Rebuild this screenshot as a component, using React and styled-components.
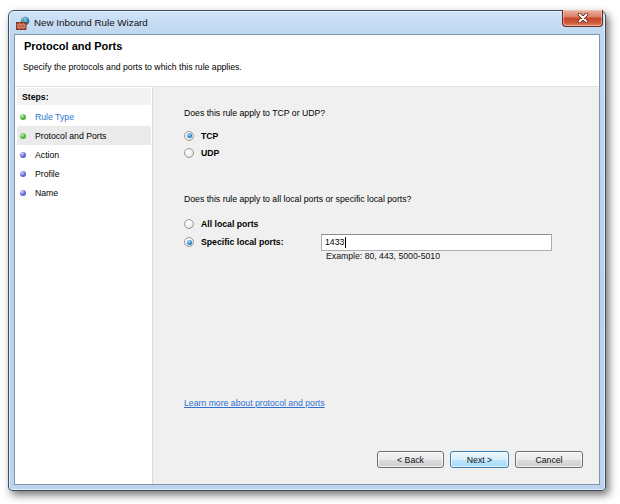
import React from "react";
import styled, { createGlobalStyle } from "styled-components";

const GlobalStyle = createGlobalStyle`
  html, body { margin: 0; padding: 0; background: #ffffff; }
  body {
    font-family: "Liberation Sans", Arial, sans-serif;
    font-size: 8.7px;
    color: #000;
  }
  * { box-sizing: border-box; }
`;

const Page = styled.div`
  width: 620px;
  height: 504px;
  padding: 10px 0 0 8px;
  overflow: hidden;
`;

const Window = styled.div`
  width: 598px;
  height: 481px;
  border: 1px solid #3e4f63;
  border-radius: 6px 6px 4px 4px;
  padding: 0 5px 5px 5px;
  display: flex;
  flex-direction: column;
  background: linear-gradient(180deg, #cfe3f8 0px, #bed6f0 24px, #b9d1eb 60%, #bcd4ee 100%);
  box-shadow: 3px 4px 9px rgba(0, 0, 0, 0.55), inset 0 0 0 1px rgba(255, 255, 255, 0.55);
`;

const TitleBar = styled.div`
  height: 23px;
  display: flex;
  align-items: center;
  padding-left: 2px;
  gap: 4px;
`;

const TitleText = styled.span`
  font-size: 9.8px;
  color: #111;
`;

const CloseButton = styled.div`
  margin-left: auto;
  align-self: flex-start;
  margin-top: -1px;
  margin-right: -3px;
  width: 41px;
  height: 17px;
  border: 1px solid #6b2a1f;
  border-top: none;
  border-radius: 0 0 4px 4px;
  background: linear-gradient(180deg, #eab2a2 0%, #dc8068 42%, #c4472c 52%, #cf5a3a 80%, #e0896c 100%);
  box-shadow: inset 0 0 0 1px rgba(255, 220, 210, 0.45);
  display: flex;
  align-items: center;
  justify-content: center;
`;

const Client = styled.div`
  flex: 1;
  min-height: 0;
  display: flex;
  flex-direction: column;
  background: #ffffff;
  border: 1px solid #8196ae;
`;

const Header = styled.div`
  height: 52px;
  padding: 5px 8px 0 8px;
  border-bottom: 1px solid #e2e2e2;
  background: #ffffff;
`;

const HeaderTitle = styled.div`
  font-weight: bold;
  font-size: 11px;
  line-height: 13px;
  padding-left: 1px;
`;

const HeaderSub = styled.div`
  margin-top: 9px;
  line-height: 11px;
`;

const Body = styled.div`
  flex: 1;
  min-height: 0;
  display: flex;
`;

const LeftPanel = styled.div`
  width: 138px;
  padding: 1px 1px 0 2px;
  background: #ffffff;
  border-right: 1px solid #dadada;
  display: flex;
  flex-direction: column;
`;

const StepsHeader = styled.div`
  height: 17px;
  background: #f2f2f2;
  font-weight: bold;
  display: flex;
  align-items: center;
  padding-left: 5px;
  margin-bottom: 2px;
`;

const StepRow = styled.div`
  height: 19px;
  display: flex;
  align-items: center;
  padding-left: 3px;
  gap: 9px;
  background: ${(p) => (p.$active ? "#ebebeb" : "transparent")};
  color: ${(p) => (p.$done ? "#2d74cf" : "#000")};
`;

const Bullet = styled.span`
  width: 6px;
  height: 6px;
  border-radius: 50%;
  flex: none;
  background: ${(p) =>
    p.$green
      ? "radial-gradient(circle at 35% 30%, #c8f2b8 0%, #5cc24a 45%, #2f8d22 100%)"
      : "radial-gradient(circle at 35% 30%, #d6d8ff 0%, #7474e0 45%, #3a3aa8 100%)"};
`;

const RightPanel = styled.div`
  flex: 1;
  background: #f0f0f0;
  display: flex;
  flex-direction: column;
  padding: 21px 16px 16px 31px;
`;

const Question = styled.div`
  line-height: 11px;
  margin-top: ${(p) => p.$mt || 0}px;
`;

const RadioGroup = styled.div`
  display: flex;
  flex-direction: column;
  margin-top: ${(p) => p.$mt || 0}px;
`;

const RadioRow = styled.div`
  height: ${(p) => p.$h || 17}px;
  display: flex;
  align-items: center;
  gap: 7px;
`;

const Radio = styled.span`
  width: 10px;
  height: 10px;
  border-radius: 50%;
  flex: none;
  border: 1px solid #9a9a9a;
  background: radial-gradient(circle at 40% 35%, #ffffff 0%, #f0f0f0 50%, #d4d4d4 100%);
  display: flex;
  align-items: center;
  justify-content: center;
  &::after {
    content: "";
    display: ${(p) => (p.$checked ? "block" : "none")};
    width: 5px;
    height: 5px;
    border-radius: 50%;
    background: radial-gradient(circle at 40% 35%, #b6e4ff 0%, #2f8fd0 50%, #124a78 100%);
  }
`;

const RadioLabel = styled.span`
  font-weight: bold;
  width: ${(p) => (p.$w ? `${p.$w}px` : "auto")};
  flex: none;
`;

const TextBox = styled.div`
  width: 231px;
  height: 17px;
  background: #ffffff;
  border: 1px solid #abadb3;
  border-top-color: #8e8f8f;
  display: flex;
  align-items: center;
  padding-left: 3px;
`;

const Caret = styled.span`
  display: inline-block;
  width: 1px;
  height: 11px;
  background: #000;
  margin-left: 1px;
`;

const Hint = styled.div`
  line-height: 11px;
  margin-left: 142px;
  color: #111;
`;

const Spacer = styled.div`
  flex: 1;
`;

const Link = styled.a`
  color: #2f6fd0;
  text-decoration: underline;
  line-height: 11px;
  align-self: flex-start;
  margin-bottom: 42px;
  cursor: pointer;
`;

const ButtonRow = styled.div`
  display: flex;
  justify-content: flex-end;
  gap: 6px;
`;

const Button = styled.div`
  width: ${(p) => p.$w}px;
  height: 17px;
  border: 1px solid ${(p) => (p.$default ? "#3c7fb1" : "#707070")};
  border-radius: 3px;
  display: flex;
  align-items: center;
  justify-content: center;
  color: #111;
  background: ${(p) =>
    p.$default
      ? "linear-gradient(180deg, #eaf6fd 0%, #d9f0fc 50%, #bee6fd 51%, #a7d9f5 100%)"
      : "linear-gradient(180deg, #f2f2f2 0%, #ebebeb 50%, #dddddd 51%, #cfcfcf 100%)"};
  box-shadow: inset 0 0 0 1px rgba(255, 255, 255, 0.7);
`;

const FirewallIcon = () => (
  <svg width="14" height="14" viewBox="0 0 14 14">
    <defs>
      <radialGradient id="globe" cx="40%" cy="35%" r="65%">
        <stop offset="0%" stopColor="#bfe6ff" />
        <stop offset="60%" stopColor="#3b8fd8" />
        <stop offset="100%" stopColor="#1c4f9a" />
      </radialGradient>
    </defs>
    <circle cx="9" cy="5" r="4.3" fill="url(#globe)" />
    <path d="M6.5 3.2 C7.5 2.4 8.6 2.8 8.8 3.8 C9 4.8 8 5.2 7.4 5.6 C6.8 6 6.4 5 6.5 3.2 Z" fill="#4caa3c" />
    <path d="M10.2 5.4 C11 5.2 12 5.8 11.6 6.9 C11.2 7.8 10.3 7.4 10.1 6.6 Z" fill="#4caa3c" />
    <rect x="0.5" y="6.5" width="9.5" height="7" fill="#b5482a" stroke="#6e2612" strokeWidth="0.8" />
    <path d="M0.8 8.8 H9.8 M0.8 11.2 H9.8 M3.5 6.8 V8.8 M7 6.8 V8.8 M2 8.8 V11.2 M5.2 8.8 V11.2 M8.4 8.8 V11.2 M3.5 11.2 V13.3 M7 11.2 V13.3"
      stroke="#e9b49a" strokeWidth="0.6" fill="none" />
  </svg>
);

const CloseGlyph = () => (
  <svg width="12" height="10" viewBox="0 0 12 10">
    <path d="M2.5 1.5 L9.5 8.5 M9.5 1.5 L2.5 8.5" stroke="#5a1d12" strokeWidth="3.4" strokeLinecap="round" />
    <path d="M2.5 1.5 L9.5 8.5 M9.5 1.5 L2.5 8.5" stroke="#ffffff" strokeWidth="1.9" strokeLinecap="round" />
  </svg>
);

const steps = [
  { label: "Rule Type", green: true, done: true },
  { label: "Protocol and Ports", green: true, active: true },
  { label: "Action" },
  { label: "Profile" },
  { label: "Name" },
];

export default function App() {
  return (
    <>
      <GlobalStyle />
      <Page>
        <Window>
          <TitleBar>
            <FirewallIcon />
            <TitleText>New Inbound Rule Wizard</TitleText>
            <CloseButton>
              <CloseGlyph />
            </CloseButton>
          </TitleBar>
          <Client>
            <Header>
              <HeaderTitle>Protocol and Ports</HeaderTitle>
              <HeaderSub>Specify the protocols and ports to which this rule applies.</HeaderSub>
            </Header>
            <Body>
              <LeftPanel>
                <StepsHeader>Steps:</StepsHeader>
                {steps.map((s) => (
                  <StepRow key={s.label} $active={s.active} $done={s.done}>
                    <Bullet $green={s.green} />
                    {s.label}
                  </StepRow>
                ))}
              </LeftPanel>
              <RightPanel>
                <Question>Does this rule apply to TCP or UDP?</Question>
                <RadioGroup $mt={8}>
                  <RadioRow>
                    <Radio $checked />
                    <RadioLabel>TCP</RadioLabel>
                  </RadioRow>
                  <RadioRow>
                    <Radio />
                    <RadioLabel>UDP</RadioLabel>
                  </RadioRow>
                </RadioGroup>
                <Question $mt={33}>Does this rule apply to all local ports or specific local ports?</Question>
                <RadioGroup $mt={10}>
                  <RadioRow $h={18}>
                    <Radio />
                    <RadioLabel>All local ports</RadioLabel>
                  </RadioRow>
                  <RadioRow $h={18}>
                    <Radio $checked />
                    <RadioLabel $w={113}>Specific local ports:</RadioLabel>
                    <TextBox>
                      1433
                      <Caret />
                    </TextBox>
                  </RadioRow>
                </RadioGroup>
                <Hint>Example: 80, 443, 5000-5010</Hint>
                <Spacer />
                <Link>Learn more about protocol and ports</Link>
                <ButtonRow>
                  <Button $w={67}>&lt; Back</Button>
                  <Button $w={59} $default>Next &gt;</Button>
                  <Button $w={68}>Cancel</Button>
                </ButtonRow>
              </RightPanel>
            </Body>
          </Client>
        </Window>
      </Page>
    </>
  );
}
